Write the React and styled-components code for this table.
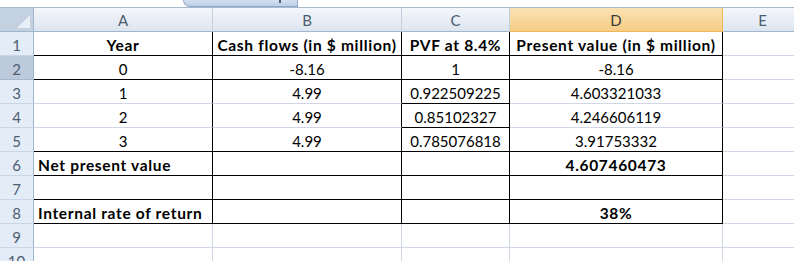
import styled, { createGlobalStyle } from "styled-components";

const GlobalStyle = createGlobalStyle`
    html, body {
        margin: 0;
        padding: 0;
        background: #ffffff;
        overflow: hidden;
    }
    body {
        font-family: 'Lato', 'Liberation Sans', sans-serif;
    }
`

const Sheet = styled.div`
    width: 794px;
    height: 261px;
    overflow: hidden;
    display: flex;
    flex-direction: column;
    background: #ffffff;
`

const TopStrip = styled.div`
    height: 7px;
    display: flex;
    border-bottom: 1px solid #a9bacd;
`

const ScrollThumb = styled.div`
    margin-left: 183px;
    width: 97px;
    height: 6px;
    background: linear-gradient(#d3e0f0, #bccfe8);
    border: 1px solid #8fa8c8;
    border-top: none;
    border-radius: 0 0 0 9px;
    display: flex;
    justify-content: flex-end;
    align-items: flex-start;
    padding-right: 16px;
`

const Grip = styled.span`
    width: 2px;
    height: 3px;
    background: #4a5f7c;
`

const Gap = styled.div`
    height: 3px;
`

const Grid = styled.div`
    display: grid;
    grid-template-columns: 34px 179px 189px 108px 213px 80px;
    grid-auto-rows: 24px;
`

const Corner = styled.div`
    position: relative;
    background: #c4d1e1;
    border-right: 1px solid #9eb6ce;
    border-bottom: 1px solid #9eb6ce;
    &::after {
        content: '';
        position: absolute;
        right: 3px;
        bottom: 3px;
        width: 0;
        height: 0;
        border-left: 13px solid transparent;
        border-bottom: 13px solid #e9eff6;
    }
`

const ColHead = styled.div`
    display: flex;
    align-items: center;
    justify-content: center;
    padding-top: 1px;
    font-size: 15px;
    color: ${props => props.$active ? '#3a3a3a' : '#4d5d72'};
    background: ${props => props.$active
        ? 'linear-gradient(#fbe2b3, #f6cd85)'
        : 'linear-gradient(#f4f7fb, #dde5ef)'};
    border-right: 1px solid ${props => props.$active ? '#f0b85c' : '#c3cfde'};
    border-bottom: 1px solid ${props => props.$active ? '#f0b85c' : '#9eb6ce'};
`

const RowHead = styled.div`
    display: flex;
    align-items: center;
    justify-content: center;
    padding-top: 3px;
    font-size: 15px;
    color: #4d5d72;
    background: ${props => props.$active ? '#bccadc' : '#e4ecf7'};
    border-right: 1px solid #9eb6ce;
    border-bottom: 1px solid ${props => props.$active ? '#a7b9cf' : '#c9d5e4'};
`

const Cell = styled.div`
    display: flex;
    align-items: center;
    justify-content: ${props => props.$left ? 'flex-start' : 'center'};
    padding-left: ${props => props.$left ? '4px' : '0'};
    padding-top: 3px;
    font-size: ${props => props.$bold ? '15.5px' : '15px'};
    letter-spacing: ${props => props.$bold ? '0.68px' : '0'};
    font-weight: ${props => props.$bold ? 700 : 400};
    color: #000000;
    white-space: nowrap;
    overflow: hidden;
    border-right: 1px solid ${props => props.$right ? '#000000' : '#d0d7e5'};
    border-bottom: 1px solid ${props => props.$bottom ? '#000000' : '#d0d7e5'};
`

const columns = ['A', 'B', 'C', 'D', 'E'];

// rows of the sheet: cells A-D, bold flags, left aligned label, black bottom lines
const rows = [
    { cells: ['Year', 'Cash flows (in $ million)', 'PVF at 8.4%', 'Present value (in $ million)'], bold: [1, 1, 1, 1], boxed: true, bottom: [1, 1, 1, 1] },
    { cells: ['0', '-8.16', '1', '-8.16'], boxed: true, bottom: [1, 1, 1, 1] },
    { cells: ['1', '4.99', '0.922509225', '4.603321033'], boxed: true, bottom: [0, 0, 1, 0] },
    { cells: ['2', '4.99', '0.85102327', '4.246606119'], boxed: true, bottom: [0, 0, 1, 0] },
    { cells: ['3', '4.99', '0.785076818', '3.91753332'], boxed: true, bottom: [1, 1, 1, 1] },
    { cells: ['Net present value', '', '', '4.607460473'], bold: [1, 0, 0, 1], left: true, boxed: true, bottom: [1, 1, 1, 1] },
    { cells: ['', '', '', ''], boxed: true, bottom: [1, 1, 1, 1] },
    { cells: ['Internal rate of return', '', '', '38%'], bold: [1, 0, 0, 1], left: true, boxed: true, bottom: [1, 1, 1, 1] },
    { cells: ['', '', '', ''] },
    { cells: ['', '', '', ''] },
];

function App() {
    return (
        <Sheet>
            <GlobalStyle />
            <TopStrip>
                <ScrollThumb><Grip /></ScrollThumb>
            </TopStrip>
            <Gap />
            <Grid>
                <Corner />
                {columns.map(c => (
                    <ColHead key={c} $active={c === 'D'}>{c}</ColHead>
                ))}
                {rows.map((row, i) => (
                    <>
                        <RowHead key={'h' + i} $active={i === 1}>{i + 1}</RowHead>
                        {row.cells.map((text, j) => (
                            <Cell
                                key={i + '-' + j}
                                $bold={row.bold && row.bold[j]}
                                $left={row.left && j === 0}
                                $right={row.boxed}
                                $bottom={row.bottom && row.bottom[j]}
                            >
                                {text}
                            </Cell>
                        ))}
                        <Cell key={i + '-e'} />
                    </>
                ))}
            </Grid>
        </Sheet>
    )
}
export default App;
